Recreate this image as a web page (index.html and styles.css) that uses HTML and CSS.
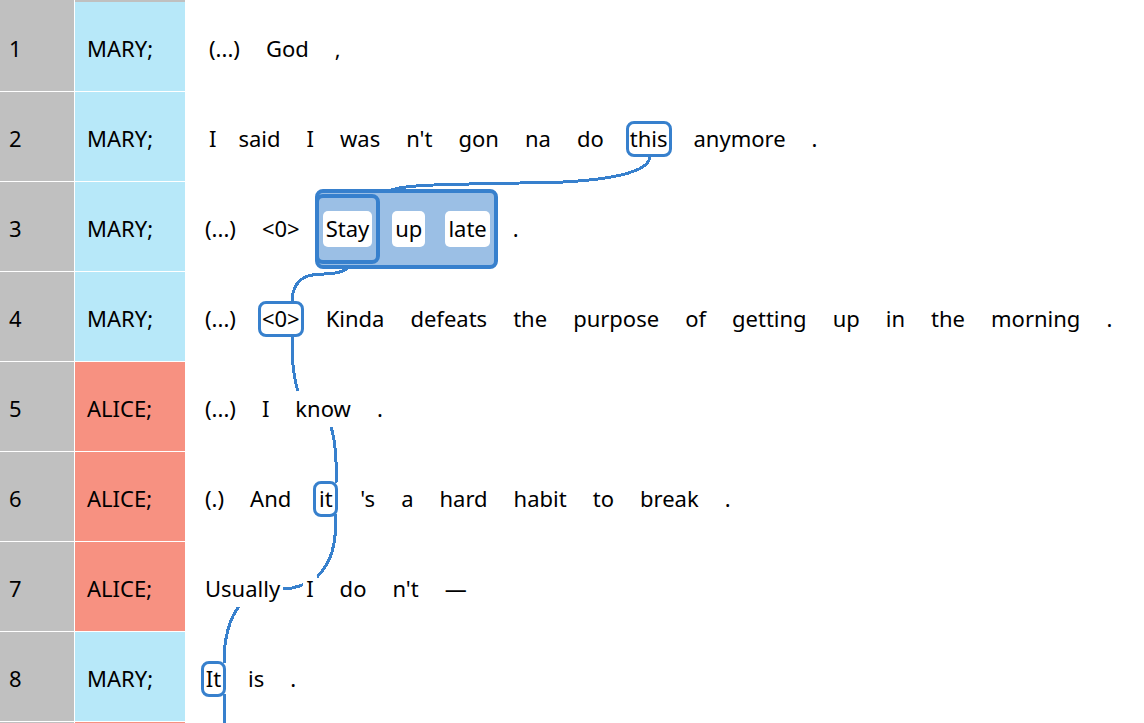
FILE: index.html
```html
<!DOCTYPE html>
<html lang="en">
<head>
<meta charset="utf-8">
<title>Transcript</title>
<link rel="stylesheet" href="styles.css">
</head>
<body>
<main class="transcript">
<svg class="links" aria-hidden="true">
  <path d="M650 156C650 176 590 183 520 183C480 184 440 184 416 186S396 189 385 192"/>
  <path d="M349 267C338 277 320 272 308 276C296 280 292 290 292 303"/>
  <path d="M292 334V345C292 365 295 382 298 392L331 426C335 440 337 460 336 483"/>
  <path d="M336 514C336 545 332 562 317 577C304 586 294 589 282 589L240 605C228 620 224 640 224 663"/>
  <path d="M224 694V723"/>
</svg>
<table class="grid">
<tbody>
<tr class="edge-top"><td class="num"></td><td class="speaker none"></td><td></td></tr>
<tr><th class="num" scope="row">1</th><td class="speaker mary">MARY;</td><td class="line"><div class="tokens inset"><span class="w">(...)</span><span class="w">God</span><span class="w">,</span></div></td></tr>
<tr><th class="num" scope="row">2</th><td class="speaker mary">MARY;</td><td class="line"><div class="tokens inset"><span class="w tight">I</span><span class="w">said</span><span class="w">I</span><span class="w">was</span><span class="w">n't</span><span class="w">gon</span><span class="w">na</span><span class="w">do</span><span class="w boxed">this</span><span class="w">anymore</span><span class="w">.</span></div></td></tr>
<tr><th class="num" scope="row">3</th><td class="speaker mary">MARY;</td><td class="line"><div class="tokens"><span class="w">(...)</span><span class="w">&lt;0&gt;</span><span class="span outer"><span class="span inner"><span class="w">Stay</span></span><span class="w">up</span><span class="w">late</span></span><span class="w">.</span></div></td></tr>
<tr><th class="num" scope="row">4</th><td class="speaker mary">MARY;</td><td class="line"><div class="tokens"><span class="w">(...)</span><span class="w boxed">&lt;0&gt;</span><span class="w">Kinda</span><span class="w">defeats</span><span class="w">the</span><span class="w">purpose</span><span class="w">of</span><span class="w">getting</span><span class="w">up</span><span class="w">in</span><span class="w">the</span><span class="w">morning</span><span class="w">.</span></div></td></tr>
<tr><th class="num" scope="row">5</th><td class="speaker alice">ALICE;</td><td class="line"><div class="tokens"><span class="w">(...)</span><span class="w">I</span><span class="w">know</span><span class="w">.</span></div></td></tr>
<tr><th class="num" scope="row">6</th><td class="speaker alice">ALICE;</td><td class="line"><div class="tokens"><span class="w">(.)</span><span class="w">And</span><span class="w boxed">it</span><span class="w">'s</span><span class="w">a</span><span class="w">hard</span><span class="w">habit</span><span class="w">to</span><span class="w">break</span><span class="w">.</span></div></td></tr>
<tr><th class="num" scope="row">7</th><td class="speaker alice">ALICE;</td><td class="line"><div class="tokens"><span class="w">Usually</span><span class="w">I</span><span class="w">do</span><span class="w">n't</span><span class="w">—</span></div></td></tr>
<tr><th class="num" scope="row">8</th><td class="speaker mary">MARY;</td><td class="line"><div class="tokens"><span class="w boxed">It</span><span class="w">is</span><span class="w">.</span></div></td></tr>
<tr class="edge-bottom"><td class="num"></td><td class="speaker alice"></td><td></td></tr>
</tbody>
</table>
</main>
</body>
</html>
```
FILE: styles.css
```css
* { box-sizing: border-box; }

body {
  margin: 0;
  background: #fff;
  color: #000;
  font-family: "Noto Sans", sans-serif;
  font-size: 22px;
  line-height: 30px;
}

.transcript {
  position: relative;
  overflow: hidden;
}

.links {
  position: absolute;
  top: 0;
  left: 0;
  width: 100%;
  height: 100%;
  fill: none;
  stroke: #3780cd;
  stroke-width: 3px;
  shape-rendering: crispEdges;
}

.grid {
  width: 100%;
  table-layout: fixed;
  border-spacing: 0;
}

.grid tr { height: 90px; }
.grid td, .grid th { padding: 0; text-align: left; font-weight: normal; }
.grid .edge-top { height: 2px; }
.grid .edge-bottom { height: 1px; }

.grid .num {
  width: 75px;
  padding: 3px 0 0 9px;
  background: #c0c0c0;
  border-right: 1px solid #fff;
  border-bottom: 1px solid #fff;
}

.grid .speaker {
  width: 110px;
  padding: 3px 0 0 12px;
  border-bottom: 1px solid #fff;
}

.grid .edge-top td, .grid .edge-bottom td {
  padding: 0;
  border-bottom: 0;
}

.grid .none { background: #c0c0c0; }
.mary { background: #b7e8f9; }
.alice { background: #f79181; }

.grid .line { padding: 4px 0 0 17px; }

.tokens {
  position: relative;
  display: flex;
  align-items: center;
  gap: 20px;
  white-space: nowrap;
}

.tokens.inset { padding-left: 4px; }

.w {
  height: 36px;
  padding: 2px 3px;
  border-radius: 5px;
  background: #fff;
}

.w.tight { margin-right: -4px; }

.w.boxed {
  min-width: 25px;
  margin: 0 -1px;
  padding: 0 1px;
  border: 3px solid #3780cd;
  border-radius: 8px;
  line-height: 28px;
  text-align: center;
}

.span {
  display: flex;
  align-items: center;
  gap: 20px;
  margin: 0 -8px;
  padding: 1px 4px;
  border: 4px solid #3780cd;
  border-radius: 8px;
  background: #9bbfe5;
}

.outer { height: 80px; margin-top: -5px; margin-bottom: -5px; }
.inner { height: 70px; }
```
